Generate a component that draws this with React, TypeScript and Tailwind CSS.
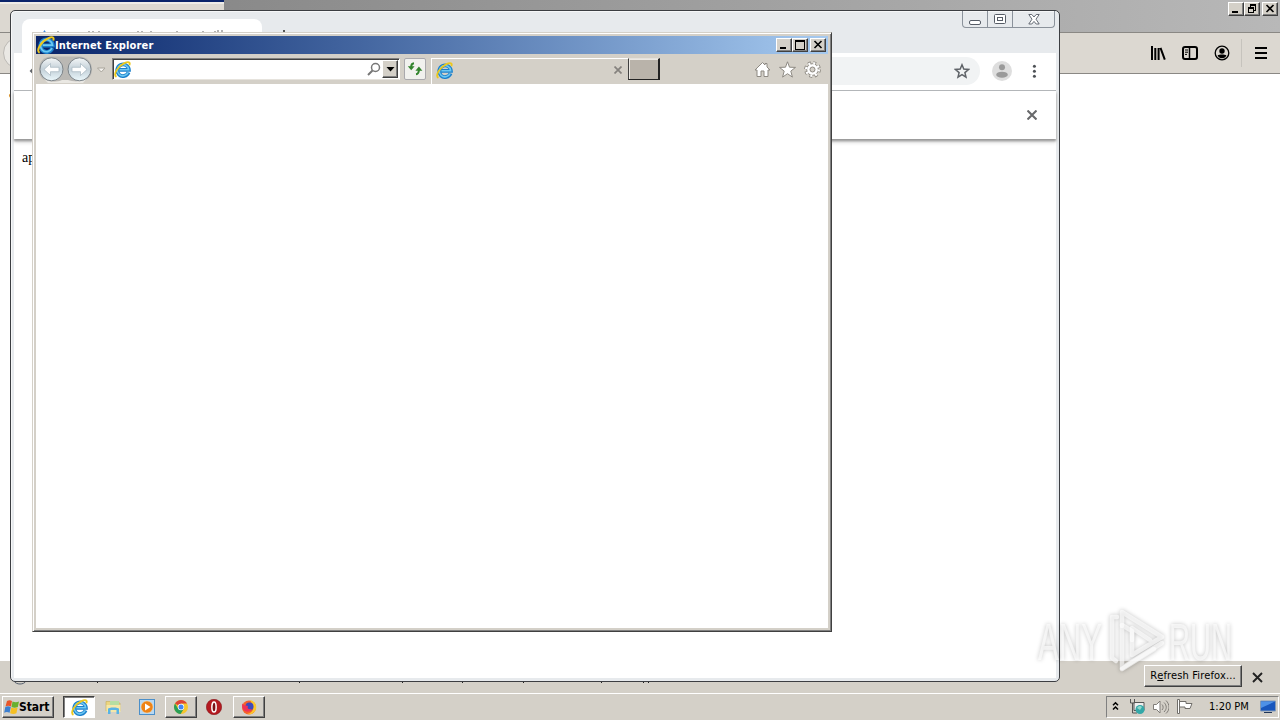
import type { ReactNode } from 'react';

interface IconProps {
  className?: string;
}

function IeIcon({ className = 'w-[17px] h-[17px]' }: IconProps) {
  return (
    <svg className={`shrink-0 ${className}`} viewBox="0 0 18 18" fill="none">
      <path d="M15.4 12a6.200 6.200 0 1 1 .4-2.500H5.500" stroke="#1c80cb" strokeWidth="4" />
      <path d="M15 12.200a6 6 0 1 1 .5-3H5.800" stroke="#6cc8f3" strokeWidth="1.700" />
      <path d="M2.600 16.800C-1.500 14.500 4 5.600 11 2.300c4.500-2.200 6.500-1 5.200 2.200" stroke="#ecc81e" strokeWidth="2" />
    </svg>
  );
}

function CaptionButton({ children }: { children: ReactNode }) {
  return (
    <div className="w-4 h-[14px] shrink-0 bg-[#d4d0c8] border border-t-white border-l-white border-r-[#404040] border-b-[#404040] shadow-[inset_-1px_-1px_0_#808080]">
      <svg className="block w-[14px] h-3" viewBox="0 0 14 12" fill="none" stroke="#000" shapeRendering="crispEdges">
        {children}
      </svg>
    </div>
  );
}

function FirefoxWindow() {
  return (
    <div className="absolute left-0 top-0 w-[1280px] h-[693px] flex flex-col bg-white">
      {/* Title bar */}
      <div className="h-8 flex shrink-0 bg-linear-to-r from-[#808080] to-[#b8b8b8]">
        <div className="w-[224px] bg-[#dcd8d1] border-t-2 border-[#0a246a] shadow-[inset_0_2px_0_#eeece8]" />
        <div className="ml-auto flex pt-[2px] pr-[2px]">
          <CaptionButton><path d="M3 9h6" strokeWidth="2" /></CaptionButton>
          <CaptionButton>
            <path d="M5 1.5h6M5 2.5h6M10.5 3v4H9M5.5 3v2M3 4.5h6M3 5.5h6M3.5 6v3.5h5V5" />
          </CaptionButton>
          <div className="w-[2px]" />
          <CaptionButton><path d="M3.5 2l7 7M10.5 2l-7 7" strokeWidth="1.6" shapeRendering="auto" /></CaptionButton>
        </div>
      </div>

      {/* Toolbar */}
      <div className="h-[42px] shrink-0 bg-[#dcd8d1] border-t border-t-[#8a8884] border-b border-b-[#8a8884] flex items-center justify-between">
        <div className="w-8 h-8 ml-[3px] rounded-full border border-[#bcb9b4] bg-[#eae8e4]" />
        <div className="flex items-center pr-[13px] text-black">
          <svg className="w-4 h-4" viewBox="0 0 16 16" fill="none" stroke="currentColor" strokeWidth="2">
            <path d="M2 1v14M5.300 3v12M8.600 3v12M10.500 2.800l4.300 11.800" />
          </svg>
          <svg className="w-4 h-4 ml-4" viewBox="0 0 16 16" fill="none" stroke="currentColor" strokeWidth="2">
            <rect x="1" y="2" width="14" height="12" rx="2" />
            <path d="M7.5 2v12" strokeWidth="1.500" />
            <path d="M3 5h3M3 7.200h3M3 9.400h2" strokeWidth="1" />
          </svg>
          <svg className="w-4 h-4 ml-4" viewBox="0 0 16 16" fill="none" stroke="currentColor">
            <circle cx="8" cy="8" r="6.800" strokeWidth="1.300" />
            <circle cx="8" cy="6" r="2.700" fill="currentColor" stroke="none" />
            <path d="M3.600 10.200c2-1 6.800-1 8.800 0-.8 4-8 4-8.800 0z" fill="currentColor" stroke="none" />
          </svg>
          <div className="w-px h-7 ml-[11px] bg-[#c6c3bd]" />
          <svg className="w-3 h-3 ml-[13px]" viewBox="0 0 12 12" stroke="currentColor" strokeWidth="2">
            <path d="M0 1h12M0 6h12M0 11h12" />
          </svg>
        </div>
      </div>

      <div className="flex-1 pl-[9px] pt-[9px] text-[16px] leading-[20px] font-['Liberation_Serif',serif]">ap</div>

      {/* Notification bar */}
      <div className="h-8 shrink-0 bg-[#d4d0c8] flex items-center justify-end pr-4">
        <div className="w-[98px] h-[22px] mb-[2px] flex items-center justify-center bg-[#d4d0c8] border border-t-white border-l-white border-r-[#404040] border-b-[#404040] shadow-[inset_-1px_-1px_0_#808080] text-[11px] tracking-[0.14px] whitespace-nowrap">
          R<span className="underline">e</span>fresh Firefox...
        </div>
        <svg className="w-[11px] h-[11px] ml-[10px] mr-px" viewBox="0 0 11 11" stroke="#222" strokeWidth="1.900">
          <path d="M1 1l9 9M10 1l-9 9" />
        </svg>
      </div>
    </div>
  );
}

// tops of the notification text that show under the Chrome window
const specks = [97, 299, 402, 462, 523, 601, 643, 648];

function NotificationSpecks() {
  return (
    <svg className="absolute left-0 top-[680px] w-[660px] h-[6px]" viewBox="0 0 660 6" fill="none">
      {specks.map((x) => (
        <rect key={x} x={x} y="2" width="1" height="1" fill="#222" />
      ))}
      <path d="M14 1c2 4 10 4 12 0" stroke="#55606e" />
    </svg>
  );
}

function ChromeWindow() {
  return (
    <div className="absolute left-[10px] top-[10px] w-[1050px] h-[672px] rounded-[5px] border border-[#3c3e42] bg-[#e7eaed] flex flex-col px-[3px] pb-[3px] overflow-hidden shadow-[inset_1px_1px_0_#f6f7f8]">
      {/* Tab strip */}
      <div className="h-[42px] shrink-0 flex">
        <div className="w-[240px] ml-[8px] mt-2 rounded-t-lg bg-white pt-[10px] pl-5">
          <svg className="w-[210px] h-3" viewBox="0 0 210 12">
            <path d="M0 5l2.500-4L5 5z" fill="#3c86d8" />
            <path
              d="M16 2v3M47 2v3M51 2v3M57 2v3M96 2v3M100 2v3M109 2v3M135 2v3M161 2v3M173 2v3M175 2h2M179 2h2"
              stroke="#666"
            />
          </svg>
        </div>
        <div className="ml-[21px] mt-[19px] w-[2px] h-2 bg-[#555]" />
        <div className="ml-auto mr-[1px] w-[93px] h-[17px] flex rounded-b-[4px] border border-t-0 border-[#8b929b]">
          <div className="w-[25px] flex items-center justify-center border-r border-[#8b929b]">
            <svg className="w-3 h-[14px]" viewBox="0 0 12 14" fill="#fff" stroke="#565c66">
              <rect x=".5" y="8.500" width="11" height="4" rx="1.500" />
            </svg>
          </div>
          <div className="w-[25px] flex items-center justify-center border-r border-[#8b929b]">
            <svg className="w-3 h-[11px]" viewBox="0 0 12 11" fill="#fff" stroke="#565c66">
              <rect x=".5" y=".5" width="11" height="9" rx="1" />
              <rect x="3.500" y="3.500" width="5" height="3" />
            </svg>
          </div>
          <div className="flex-1 flex items-center justify-center">
            <svg className="w-3 h-[11px]" viewBox="0 0 12 11" fill="#fff" stroke="#565c66" strokeWidth=".9">
              <path d="M.8.5h3L6 3 8.200.5h3L8 5.200l3.200 4.800h-3L6 7.400 3.800 10h-3L4 5.200z" />
            </svg>
          </div>
        </div>
      </div>

      {/* Toolbar */}
      <div className="h-[38px] shrink-0 bg-white border-b border-[#b2b5b8] flex items-center pb-[2px] pl-[15px] pr-4">
        <svg className="w-4 h-3" viewBox="0 0 16 12" fill="none" stroke="#5f6368" strokeWidth="2">
          <path d="M7 1L2 6l5 5M2 6h14" />
        </svg>
        <div className="ml-20 flex-1 h-7 rounded-full bg-[#f1f3f4] flex items-center justify-end pr-[10px]">
          <svg className="w-4 h-4" viewBox="0 0 16 16" fill="none" stroke="#5f6368" strokeWidth="1.500">
            <path d="M8 1.800l1.800 4.300 4.700.4-3.600 3.100 1.100 4.600L8 11.700l-4 2.500 1.100-4.600-3.600-3.100 4.700-.4z" />
          </svg>
        </div>
        <svg className="w-5 h-5 ml-3" viewBox="0 0 20 20" fill="#9a9a9a">
          <circle cx="10" cy="10" r="10" fill="#dedede" />
          <circle cx="10" cy="6.300" r="3" />
          <ellipse cx="10" cy="13.700" rx="5.800" ry="3" />
        </svg>
        <svg className="w-3 h-4 ml-4" viewBox="0 0 12 16" fill="#4e5256">
          <circle cx="6.400" cy="3.300" r="1.500" />
          <circle cx="6.400" cy="8.300" r="1.500" />
          <circle cx="6.400" cy="13.300" r="1.500" />
        </svg>
      </div>

      {/* Info bar */}
      <div className="relative h-12 shrink-0 bg-white flex items-center justify-end pr-[19px] shadow-[0_2px_2px_#999,0_3px_4px_#ccc]">
        <svg className="w-[10px] h-[10px]" viewBox="0 0 10 10" stroke="#68696b" strokeWidth="2.100">
          <path d="M.5.5l9 9M9.500.5l-9 9" />
        </svg>
      </div>

      <div className="flex-1 bg-white pl-2 pt-[9px] text-[14px] leading-[20px] font-['Liberation_Serif',serif]">app</div>
    </div>
  );
}

function IeToolbar() {
  return (
    <div className="h-[30px] shrink-0 bg-[#d4d0c8] flex">
      <svg className="w-[72px] h-[30px] shrink-0" viewBox="0 0 72 30">
        <defs>
          <linearGradient id="nav" x1="0" y1="0" x2="0" y2="1">
            <stop offset="0" stopColor="#f4f6f7" />
            <stop offset=".5" stopColor="#c3d0d8" />
            <stop offset="1" stopColor="#ecf8fc" />
          </linearGradient>
        </defs>
        <path d="M15 2.500h28c7 0 13 5 13 13s-6 12-13 12H15c-7 0-12-4-12-12s5-13 12-13z" fill="#bab8b4" />
        <path d="M6 23c4 5 14 6 20 3h6c8 3 17 1 21-4l-6 7H12z" fill="#eae8e3" />
        <circle cx="15.500" cy="15.300" r="11.500" fill="url(#nav)" stroke="#7c8388" />
        <circle cx="43.500" cy="15.300" r="11.500" fill="url(#nav)" stroke="#7c8388" />
        <path d="M8 15.500l6.500-6v3.800H23v4.400h-8.500v3.800z" fill="#fff" stroke="#a5b5be" strokeWidth=".7" />
        <path d="M51 15.500l-6.500-6v3.800H36v4.400h8.500v3.800z" fill="#fff" stroke="#a5b5be" strokeWidth=".7" />
        <path d="M61.500 14h7.500l-3.700 4z" fill="#f4f2ee" stroke="#aaa69d" />
      </svg>

      {/* Address bar */}
      <div className="ml-[4px] mt-[4px] w-[288px] h-[22px] bg-white border border-t-[#808080] border-l-[#808080] border-r-white border-b-[#e6e3dd] shadow-[inset_1px_1px_0_#404040] flex items-center pl-[1px]">
        <IeIcon className="w-[17px] h-[17px]" />
        <svg className="w-[14px] h-[14px] ml-auto" viewBox="0 0 14 14" fill="none" stroke="#777">
          <circle cx="8.500" cy="5.500" r="4" strokeWidth="1.500" />
          <path d="M5.500 8.500L1 13" strokeWidth="2" />
        </svg>
        <div className="ml-[1px] mr-[1px] w-4 h-[18px] flex items-center justify-center bg-[#d4d0c8] border border-t-white border-l-white border-r-[#404040] border-b-[#404040] shadow-[inset_-1px_-1px_0_#808080]">
          <svg className="w-[9px] h-[5px]" viewBox="0 0 9 5"><path d="M.5 0h8l-4 4.500z" /></svg>
        </div>
      </div>

      <div className="ml-1 mt-[4px] w-[22px] h-[22px] bg-[#f1f1ee] border border-[#aaa9ad] rounded-[2px] flex items-center justify-center">
        <svg className="w-4 h-4" viewBox="0 0 16 16" fill="none" stroke="#32842d" strokeWidth="2">
          <path d="M7 2.200C4.800 2.400 4.200 3.500 4.200 6M9 13.200c2.400-.2 2.900-2 2.900-5" />
          <path d="M.8 5.200h6.800L4.200 9.200zM8.400 9.800h7l-3.500-4.200z" fill="#32842d" stroke="none" />
        </svg>
      </div>

      {/* Tab */}
      <div className="ml-[5px] mt-[4px] w-[197px] border-t border-l border-white flex items-center pl-[4px] pr-[6px] pb-[3px]">
        <IeIcon className="w-[17px] h-[17px]" />
        <svg className="w-2 h-2 ml-auto" viewBox="0 0 8 8" stroke="#85827e" strokeWidth="1.700">
          <path d="M.5.5l7 7M7.500.5l-7 7" />
        </svg>
      </div>
      <div className="mt-[4px] w-8 h-[22px] bg-[#b9b3aa] border-r-2 border-l border-b border-t border-l-[#404040] border-r-[#222] border-b-[#222] border-t-[#e5e2dd] shadow-[inset_1px_1px_0_#ece9e4]" />

      <div className="ml-auto mr-[7px] pt-[1px] flex items-center gap-2">
        <svg className="w-[17px] h-[17px]" viewBox="0 0 17 17" fill="#fff" stroke="#8d8982">
          <path d="M8.500 1.500L1 9h2v6.500h4V10h3v5.500h4V9h2l-3-3V2.500h-2V4z" />
        </svg>
        <svg className="w-[17px] h-[17px]" viewBox="0 0 17 17" fill="#fff" stroke="#8d8982">
          <path d="M8.500.8l2 5.400 6 .2-4.700 3.700 1.600 6-4.900-3.400-4.900 3.400 1.600-6L.5 6.400l6-.2z" />
        </svg>
        <svg className="w-[17px] h-[17px]" viewBox="0 0 17 17">
          <circle cx="8.500" cy="8.500" r="6.500" fill="none" stroke="#8d8982" strokeWidth="3.800" strokeDasharray="2.700 2.400" />
          <circle cx="8.500" cy="8.500" r="5.800" fill="#fff" stroke="#8d8982" />
          <circle cx="8.500" cy="8.500" r="6.300" fill="none" stroke="#fff" strokeWidth="2.400" strokeDasharray="2 2.950" />
          <circle cx="8.500" cy="8.500" r="2.500" fill="#d4d0c8" stroke="#8d8982" />
        </svg>
      </div>
    </div>
  );
}

function IeWindow() {
  return (
    <div className="absolute left-8 top-8 w-[800px] h-[600px] bg-[#d4d0c8] border border-t-[#d4d0c8] border-l-[#d4d0c8] border-r-[#404040] border-b-[#404040] shadow-[inset_1px_1px_0_#fff,inset_-1px_-1px_0_#808080] p-[3px] flex flex-col">
      <div className="h-[18px] shrink-0 bg-linear-to-r from-[#0a246a] to-[#a6caf0] flex items-center pl-[1px] pr-[2px]">
        <IeIcon className="w-[18px] h-[18px]" />
        <span className="text-white font-bold text-[11px] leading-none tracking-[0.15px] whitespace-nowrap">
          Internet Explorer
        </span>
        <div className="ml-auto flex">
          <CaptionButton><path d="M3 9h6" strokeWidth="2" /></CaptionButton>
          <CaptionButton><path d="M2.500 1v9h9V1M2 1h10M2 2h10" /></CaptionButton>
          <div className="w-[2px]" />
          <CaptionButton><path d="M3.500 2l7 7M10.500 2l-7 7" strokeWidth="1.600" shapeRendering="auto" /></CaptionButton>
        </div>
      </div>
      <IeToolbar />
      <div className="flex-1 bg-white" />
    </div>
  );
}

function TaskButton({ children }: { children: ReactNode }) {
  return (
    <div className="w-8 h-[22px] flex items-center justify-center border border-t-white border-l-white border-r-[#404040] border-b-[#404040] shadow-[inset_-1px_-1px_0_#808080]">
      {children}
    </div>
  );
}

function Taskbar() {
  return (
    <div className="absolute left-0 top-[692px] w-[1280px] h-7 bg-[#d4d0c8] shadow-[inset_0_1px_0_#d4d0c8,inset_0_2px_0_#fff] pt-[4px] pl-[2px] pr-[1px] flex">
      <div className="w-[52px] h-[22px] flex items-center pl-[1px] border border-t-white border-l-white border-r-[#404040] border-b-[#404040] shadow-[inset_-1px_-1px_0_#808080]">
        <svg className="w-4 h-4 shrink-0" viewBox="0 0 16 16">
          <path d="M3 2c2-1.300 3.500-1 5 0L7 7.500c-2-1-3.500-1-5.500 0z" fill="#e8562a" />
          <path d="M8.500 2.500c2 1 4.500 1 6.500 0L13.800 8c-2 1-4.300 1-6.300 0z" fill="#69b02e" />
          <path d="M1.300 8c2-1 3.500-1 5.500 0L5.600 13.800c-2-1-3.600-1-5.400 0z" fill="#3c7fd0" />
          <path d="M7.300 8.500c2 1 4 1 6.300 0l-1.200 5.800c-2 1-4 1-6.300 0z" fill="#f5bf22" />
        </svg>
        <span className="-ml-px font-bold text-[12px] leading-none tracking-[-0.1px]">Start</span>
      </div>

      <div className="ml-[9px] flex">
        <div className="w-8 h-[22px] bg-white border border-t-[#404040] border-l-[#404040] border-r-white border-b-white shadow-[inset_1px_1px_0_#808080] flex items-center justify-center">
          <IeIcon className="w-[17px] h-[17px]" />
        </div>
        <div className="w-9 h-[22px] flex items-center justify-center">
          <svg className="w-[17px] h-4" viewBox="0 0 17 16">
            <path d="M1 2.500h6l1 1.500h7v8H1z" fill="#ecd681" stroke="#c7ac55" strokeWidth=".6" />
            <path d="M5 2h9v4H5z" fill="#b6dea2" />
            <path d="M1.500 6h14v7h-14z" fill="#f5e7a8" />
            <path d="M3 15V10c0-2 11-2 11 0v5h-2.500v-4h-6v4z" fill="#58b3e5" />
          </svg>
        </div>
        <div className="w-8 h-[22px] flex items-center justify-center">
          <svg className="w-4 h-4" viewBox="0 0 16 16">
            <rect x=".5" y=".5" width="15" height="15" fill="#b7d8f2" stroke="#4b8fc9" />
            <circle cx="8" cy="8" r="6" fill="#ee8315" stroke="#fbd5a0" strokeWidth=".5" />
            <path d="M6 4.500l5.500 3.500L6 11.500z" fill="#fff" />
          </svg>
        </div>
        <div className="w-[2px]" />
        <TaskButton>
          <svg className="w-[14px] h-[14px]" viewBox="0 0 14 14">
            <circle cx="7" cy="7" r="7" fill="#f6c62d" />
            <path d="M7 7L1 3.400A7 7 0 0 1 13 3.500H7z" fill="#dc4437" />
            <path d="M1 3.400A7 7 0 0 0 6.600 14L10 8.500 7 9 4 8.600z" fill="#2a9f57" />
            <circle cx="7" cy="7" r="3.200" fill="#fff" />
            <circle cx="7" cy="7" r="2.500" fill="#4285f4" />
          </svg>
        </TaskButton>
        <div className="w-9 h-[22px] pr-[2px] flex items-center justify-center">
          <svg className="w-4 h-4" viewBox="0 0 15 15">
            <circle cx="7.500" cy="7.500" r="7.200" fill="#b51a20" stroke="#7d1015" strokeWidth=".5" />
            <ellipse cx="7.500" cy="7.500" rx="2" ry="4.800" fill="#7b1015" stroke="#fff" strokeWidth="1.400" />
          </svg>
        </div>
        <TaskButton>
          <svg className="w-4 h-4" viewBox="0 0 16 16">
            <circle cx="8" cy="8.500" r="7" fill="#f5622a" />
            <path d="M9 1c5 1 7 5 6 9s-5 6-9 5c5-1 7-4 6-8-.5-2-2-4-3-6z" fill="#fcc72c" />
            <circle cx="8.500" cy="7.500" r="4" fill="#3d49bd" />
            <path d="M1 4c1 3 3 2 6 3-1 2 0 4 4 3-1 3-7 4-9 0-1-2-1-4-1-6z" fill="#ef3358" />
          </svg>
        </TaskButton>
      </div>

      {/* Tray */}
      <div className="ml-auto w-[173px] h-[22px] border border-t-[#808080] border-l-[#808080] border-r-white border-b-white flex items-center text-[11px]">
        <svg className="w-[7px] h-[10px] mb-[2px] ml-[5px] shrink-0" viewBox="0 0 7 10" fill="none" stroke="#000" strokeWidth="1.500">
          <path d="M1 4.300l2.500-2.500L6 4.300M1 8.500L3.500 6 6 8.500" />
        </svg>
        <svg className="w-4 h-4 ml-[10px] shrink-0" viewBox="0 0 16 16" fill="none">
          <path d="M5 3.500h10v8H5z" fill="#eee" stroke="#555" />
          <path d="M1.500 0v4h4V0M3.500 4v10H8" stroke="#555" />
          <circle cx="11" cy="10.500" r="4.500" fill="#33a8a8" />
          <path d="M8 9c2-3 4-2 5-1l-2 3z" fill="#91d8cb" />
        </svg>
        <svg className="w-4 h-4 ml-2 shrink-0" viewBox="0 0 16 16" fill="none" stroke="#807d78">
          <path d="M.5 5.500h3L7 2v12L3.500 10.500h-3z" fill="#fff" />
          <path d="M9 5.500c1.500 1.500 1.500 4 0 5.500M11 3.500c3 3 3 6.500 0 9.500M13 1.500c4 4 4 9.500 0 13" />
        </svg>
        <svg className="w-4 h-4 ml-2 shrink-0" viewBox="0 0 16 16" fill="#fff" stroke="#706e6a">
          <path d="M.5.5h2v14h-2zM2.500 2.500H9v2h6l-2 5H8V8H2.500z" />
        </svg>
        <span className="ml-4 pt-px tracking-[0px] whitespace-nowrap">1:20 PM</span>
        <svg className="w-4 h-[14px] ml-auto mr-[2px] shrink-0" viewBox="0 0 16 14">
          <path d="M.5 1h15v10H.5z" fill="#1957bd" stroke="#8399b5" />
          <path d="M1 1.500h14L1 8z" fill="#4e91e7" />
          <path d="M4 12.500h8" stroke="#1f3559" />
        </svg>
      </div>
    </div>
  );
}

function Watermark() {
  return (
    <svg
      className="absolute left-[1030px] top-[602px] w-[250px] h-[76px] drop-shadow-[0_0_2px_rgba(0,0,0,0.35)]"
      viewBox="0 0 250 76"
      fill="#fff"
      fillOpacity=".65"
      fontFamily="Liberation Sans Narrow, Liberation Sans, sans-serif"
      fontSize="51"
    >
      <text x="8" y="58" textLength="64" lengthAdjust="spacingAndGlyphs">ANY</text>
      <text x="139" y="58" textLength="63" lengthAdjust="spacingAndGlyphs">RUN</text>
      <g fill="none" stroke="#fff" strokeOpacity=".65" strokeWidth="4.500" strokeLinecap="round" strokeLinejoin="round">
        <path d="M87 15h-5v41l4 3" />
        <path d="M102 38V29L92 23v43l40-25" />
        <path d="M92 24V10l40 25-30 18V26l18 12M92 67l32-20" />
      </g>
    </svg>
  );
}

export default function App() {
  return (
    <div className="relative w-[1280px] h-[720px] overflow-hidden bg-[#d4d0c8] text-black font-['DejaVu_Sans_Condensed','DejaVu_Sans',sans-serif]">
      <FirefoxWindow />
      <NotificationSpecks />
      <ChromeWindow />
      <IeWindow />
      <Taskbar />
      <Watermark />
    </div>
  );
}
